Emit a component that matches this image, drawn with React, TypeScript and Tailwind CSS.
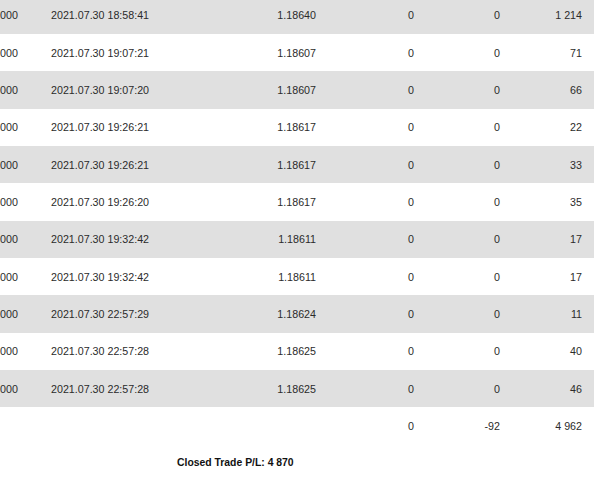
import React from "react";

type Row = {
  lot: string;
  time: string;
  price: string;
  commission: string;
  swap: string;
  profit: string;
};

const rows: Row[] = [
  { lot: "000", time: "2021.07.30 18:58:41", price: "1.18640", commission: "0", swap: "0", profit: "1 214" },
  { lot: "000", time: "2021.07.30 19:07:21", price: "1.18607", commission: "0", swap: "0", profit: "71" },
  { lot: "000", time: "2021.07.30 19:07:20", price: "1.18607", commission: "0", swap: "0", profit: "66" },
  { lot: "000", time: "2021.07.30 19:26:21", price: "1.18617", commission: "0", swap: "0", profit: "22" },
  { lot: "000", time: "2021.07.30 19:26:21", price: "1.18617", commission: "0", swap: "0", profit: "33" },
  { lot: "000", time: "2021.07.30 19:26:20", price: "1.18617", commission: "0", swap: "0", profit: "35" },
  { lot: "000", time: "2021.07.30 19:32:42", price: "1.18611", commission: "0", swap: "0", profit: "17" },
  { lot: "000", time: "2021.07.30 19:32:42", price: "1.18611", commission: "0", swap: "0", profit: "17" },
  { lot: "000", time: "2021.07.30 22:57:29", price: "1.18624", commission: "0", swap: "0", profit: "11" },
  { lot: "000", time: "2021.07.30 22:57:28", price: "1.18625", commission: "0", swap: "0", profit: "40" },
  { lot: "000", time: "2021.07.30 22:57:28", price: "1.18625", commission: "0", swap: "0", profit: "46" },
];

const gridCols = "grid grid-cols-[51px_189px_76px_98px_86px_82px_12px] items-center h-[37.33px]";

export default function App() {
  return (
    <div
      className="w-[600px] h-[490px] overflow-hidden bg-white text-[10.7px] text-[#2b2b2b]"
      style={{ fontFamily: '"Liberation Sans", Arial, sans-serif' }}
    >
      <div className="w-[594px] -mt-[3.33px]">
        {rows.map((r, i) => (
          <div
            key={i}
            className={`${gridCols} ${i % 2 === 0 ? "bg-[#e0e0e0]" : "bg-white"}`}
          >
            <span className="whitespace-nowrap">{r.lot}</span>
            <span className="whitespace-nowrap">{r.time}</span>
            <span className="text-right">{r.price}</span>
            <span className="text-right">{r.commission}</span>
            <span className="text-right">{r.swap}</span>
            <span className="text-right whitespace-nowrap">{r.profit}</span>
            <span />
          </div>
        ))}

        {/* totals */}
        <div className={gridCols}>
          <span />
          <span />
          <span />
          <span className="text-right">0</span>
          <span className="text-right">-92</span>
          <span className="text-right whitespace-nowrap">4 962</span>
          <span />
        </div>
      </div>

      <div className="h-[37px] flex items-center pl-[177px] font-bold text-[10.4px] text-[#111111]">
        Closed Trade P/L: 4 870
      </div>
    </div>
  );
}
